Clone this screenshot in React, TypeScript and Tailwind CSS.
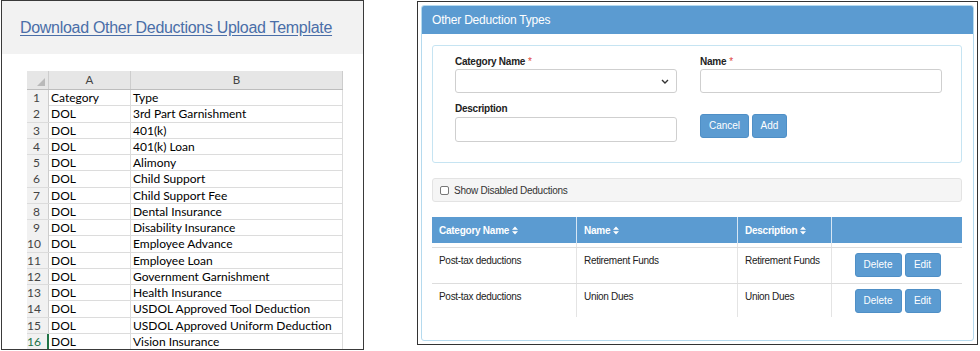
import React from 'react';

const sheetRows: [string, string][] = [
  ['Category', 'Type'],
  ['DOL', '3rd Part Garnishment'],
  ['DOL', '401(k)'],
  ['DOL', '401(k) Loan'],
  ['DOL', 'Alimony'],
  ['DOL', 'Child Support'],
  ['DOL', 'Child Support Fee'],
  ['DOL', 'Dental Insurance'],
  ['DOL', 'Disability Insurance'],
  ['DOL', 'Employee Advance'],
  ['DOL', 'Employee Loan'],
  ['DOL', 'Government Garnishment'],
  ['DOL', 'Health Insurance'],
  ['DOL', 'USDOL Approved Tool Deduction'],
  ['DOL', 'USDOL Approved Uniform Deduction'],
  ['DOL', 'Vision Insurance'],
];

const deductions = [
  { category: 'Post-tax deductions', name: 'Retirement Funds', description: 'Retirement Funds' },
  { category: 'Post-tax deductions', name: 'Union Dues', description: 'Union Dues' },
];

const SortIcon = () => (
  <svg width="6" height="9" viewBox="0 0 6 9" className="inline-block ml-[3px] align-[-1px]">
    <path d="M3 0.5 L6 3.8 H0 Z M3 8.5 L6 5.2 H0 Z" fill="white" />
  </svg>
);

const Button = ({ label, w }: { label: string; w: string }) => (
  <button
    className={`${w} h-[24px] bg-[#5b9bd1] border border-[#4f8fc6] rounded-[3px] text-white text-[10px] leading-none`}
  >
    {label}
  </button>
);

const Spreadsheet = () => (
  <div className="ml-[25px] mt-[17px] w-[316px] font-['Lato',sans-serif] text-[12px] text-black">
    <div className="grid grid-cols-[22px_82px_212px] h-[19px] bg-[#e6e6e6] border-b border-[#bdbdbd] text-[#444] text-[11.5px]">
      <div className="relative border-r border-[#cdcdcd]">
        <svg width="8" height="8" viewBox="0 0 8 8" className="absolute right-[3px] bottom-[3px]">
          <polygon points="8,0 8,8 0,8" fill="#b9b9b9" />
        </svg>
      </div>
      <div className="flex items-center justify-center border-r border-[#cdcdcd]">A</div>
      <div className="flex items-center justify-center border-r border-[#cdcdcd]">B</div>
    </div>
    {sheetRows.map(([a, b], i) => {
      const last = i === sheetRows.length - 1;
      return (
        <div key={i} className="grid grid-cols-[22px_82px_212px] h-[16.25px] leading-[15.5px] border-b border-[#dcdcdc]">
          <div
            className={`text-right pr-[8px] bg-[#f1f1f1] ${
              last ? 'text-[#217346] border-r-2 border-[#217346]' : 'text-[#444] border-r border-[#cdcdcd]'
            }`}
          >
            {i + 1}
          </div>
          <div className="pl-[2px] border-r border-[#dcdcdc] whitespace-nowrap">{a}</div>
          <div className="pl-[2px] border-r border-[#dcdcdc] whitespace-nowrap">{b}</div>
        </div>
      );
    })}
  </div>
);

const Label = ({ text, required }: { text: string; required?: boolean }) => (
  <div className="h-[12px] leading-[12px] text-[10px] font-bold tracking-[-0.25px] text-[#222]">
    {text}
    {required && <span className="text-[#e0443a] font-normal ml-[3px]">*</span>}
  </div>
);

export default function App() {
  return (
    <div className="w-[980px] h-[351px] bg-white flex items-start overflow-hidden">
      <div className="ml-px w-[363px] h-[350px] border border-[#3a3a3a] overflow-hidden bg-white">
        <div className="h-[53px] bg-[#f2f2f2] pl-[18px] pt-[14px]">
          <span className="font-['Liberation_Sans',Arial,sans-serif] text-[16px] leading-[19px] tracking-[-0.3px] text-[#4a6ea8] underline decoration-[#4a6ea8] underline-offset-2">
            Download Other Deductions Upload Template
          </span>
        </div>
        <Spreadsheet />
      </div>

      <div className="ml-[53px] mt-px w-[561px] h-[344px] border border-[#333] p-[3px] bg-white font-['Liberation_Sans',Arial,sans-serif] text-[#222]">
        <div className="h-full border border-[#b5daee] rounded-[3px] overflow-hidden">
          <div className="h-[28px] bg-[#5b9bd1] text-white text-[12px] tracking-[-0.2px] pl-[10px] flex items-center">
            Other Deduction Types
          </div>

          <div className="pl-[10px] pr-[11px] pt-[11px]">
            <div className="h-[118px] border border-[#c6e4f2] rounded-[3px] pl-[22px] pt-[10px]">
              <div className="grid grid-cols-[222px_242px] gap-x-[23px]">
                <div>
                  <Label text="Category Name" required />
                  <div className="mt-px h-[24px] border border-[#cfcfcf] rounded-[3px] flex items-center justify-end pr-[7px]">
                    <svg width="8" height="5" viewBox="0 0 8 5">
                      <polyline points="1,1 4,4 7,1" fill="none" stroke="#333" strokeWidth="1.4" />
                    </svg>
                  </div>
                </div>
                <div>
                  <Label text="Name" required />
                  <div className="mt-px h-[24px] border border-[#cfcfcf] rounded-[3px]" />
                </div>
                <div className="mt-[10px]">
                  <Label text="Description" />
                  <div className="mt-[2px] h-[25px] border border-[#cfcfcf] rounded-[3px]" />
                </div>
                <div className="mt-[21px] flex gap-[3px]">
                  <Button label="Cancel" w="w-[49px]" />
                  <Button label="Add" w="w-[35px]" />
                </div>
              </div>
            </div>

            <div className="mt-[15px] h-[24px] bg-[#f5f5f5] border border-[#e3e3e3] rounded-[3px] flex items-center pl-[7px] gap-[5px]">
              <div className="w-[9px] h-[9px] border border-[#777] rounded-[2px] bg-white" />
              <span className="text-[10px] tracking-[-0.25px] text-[#333]">Show Disabled Deductions</span>
            </div>

            <div className="mt-[15px] h-[100px] overflow-hidden">
              <div className="grid grid-cols-[145px_161px_94px_131px] h-[26px] bg-[#5b9bd1] text-white text-[10px] font-bold tracking-[-0.25px]">
                <div className="flex items-center pl-[7px] border-r border-[#d6e6f4]">Category Name<SortIcon /></div>
                <div className="flex items-center pl-[7px] border-r border-[#d6e6f4]">Name<SortIcon /></div>
                <div className="flex items-center pl-[7px] border-r border-[#d6e6f4]">Description<SortIcon /></div>
                <div />
              </div>
              <div className="grid grid-cols-[145px_161px_94px_131px] h-[5px] border-b border-[#dddddd]">
                <div className="border-r border-[#e4e4e4]" />
                <div className="border-r border-[#e4e4e4]" />
                <div className="border-r border-[#e4e4e4]" />
                <div />
              </div>
              {deductions.map((d, i) => (
                <div
                  key={i}
                  className="grid grid-cols-[145px_161px_94px_131px] h-[36px] border-b border-[#dddddd] text-[10px] tracking-[-0.3px] text-[#222]"
                >
                  <div className="pl-[7px] pt-[5px] border-r border-[#e4e4e4]">{d.category}</div>
                  <div className="pl-[7px] pt-[5px] border-r border-[#e4e4e4]">{d.name}</div>
                  <div className="pl-[7px] pt-[5px] border-r border-[#e4e4e4]">{d.description}</div>
                  <div className="pt-[5px] flex justify-center gap-[3px] tracking-normal">
                    <Button label="Delete" w="w-[47px]" />
                    <Button label="Edit" w="w-[36px]" />
                  </div>
                </div>
              ))}
            </div>
          </div>
        </div>
      </div>
    </div>
  );
}
